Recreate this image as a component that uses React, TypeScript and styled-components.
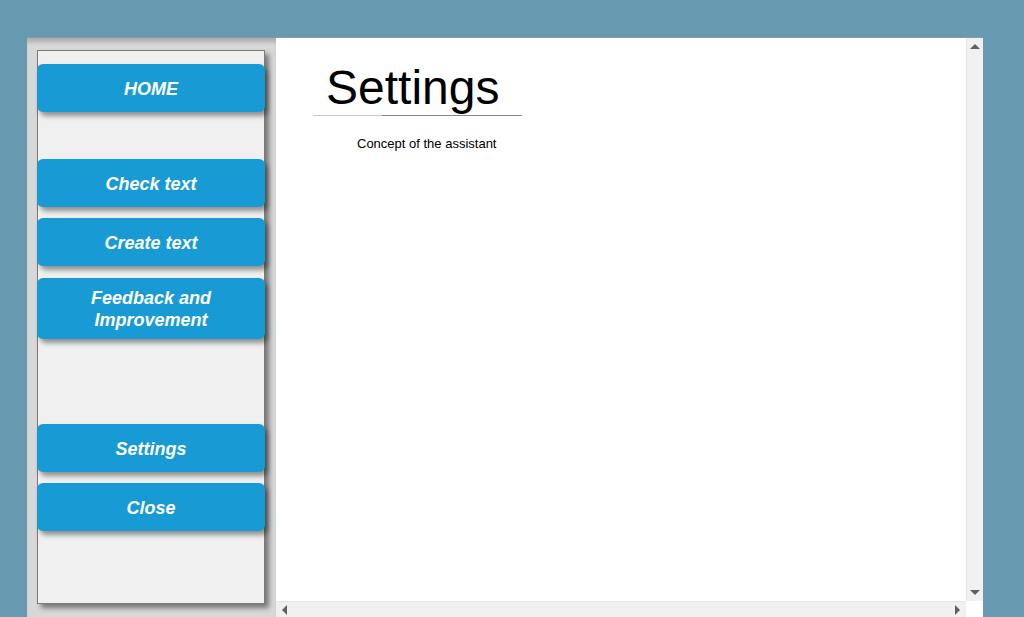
import React from 'react';
import styled, { createGlobalStyle } from 'styled-components';

const GlobalStyle = createGlobalStyle`
  html, body {
    margin: 0;
    padding: 0;
    background: #6799b0;
    font-family: "Liberation Sans", Arial, sans-serif;
  }
`;

const Page = styled.div`
  height: 617px;
  padding: 37px 0 0 27px;
  box-sizing: border-box;
  overflow: hidden;
`;

const Window = styled.div`
  display: flex;
  width: 956px;
  height: 580px;
  border-top: 1px solid #8a9aa2;
`;

const Sidebar = styled.div`
  width: 249px;
  flex-shrink: 0;
  background: #d8d8d8;
  padding: 12px 11px 0 10px;
  box-sizing: border-box;
  box-shadow: inset 0 6px 4px -2px rgba(0, 0, 0, 0.2);
`;

const Panel = styled.div`
  display: flex;
  flex-direction: column;
  width: 228px;
  height: 554px;
  box-sizing: border-box;
  background: #f0f0f0;
  border: 1px solid #7a7a7a;
  box-shadow: 4px 4px 5px rgba(0, 0, 0, 0.45);
`;

const NavButton = styled.button<{ top: number; tall?: boolean }>`
  display: flex;
  align-items: center;
  justify-content: center;
  margin: ${({ top }) => top}px -1px 0 -1px;
  width: 228px;
  height: ${({ tall }) => (tall ? 61 : 48)}px;
  padding: 1px 10px 0;
  border: none;
  border-radius: 6px;
  background: #189bd5;
  color: #fff;
  font-family: "Liberation Sans", Arial, sans-serif;
  font-size: 18px;
  font-weight: bold;
  font-style: italic;
  line-height: 22px;
  text-align: center;
  box-shadow: 3px 4px 5px rgba(0, 0, 0, 0.4);
  cursor: pointer;
`;

const Main = styled.div`
  flex: 1;
  display: grid;
  grid-template-columns: 1fr 17px;
  grid-template-rows: 1fr 17px;
  background: #fff;
`;

const Content = styled.div`
  padding: 23px 0 0 37px;
  overflow: hidden;
`;

const Title = styled.h1`
  margin: 0;
  width: 209px;
  padding: 0 0 0 13px;
  box-sizing: border-box;
  font-family: "Liberation Sans", Arial, sans-serif;
  font-size: 48px;
  font-weight: normal;
  line-height: 54px;
  color: #000;
`;

const Rule = styled.div`
  width: 209px;
  height: 1px;
  background: linear-gradient(to right, #c8c8c8 0 33%, #858585 33%);
`;

const Subtitle = styled.p`
  margin: 20px 0 0 44px;
  font-size: 13px;
  line-height: 15px;
  color: #000;
`;

const VScroll = styled.div`
  display: flex;
  flex-direction: column;
  justify-content: space-between;
  align-items: center;
  background: #f0f0f0;
  border-left: 1px solid #e6e6e6;
  padding: 6px 0 6px;
`;

const HScroll = styled.div`
  display: flex;
  justify-content: space-between;
  align-items: center;
  background: #f0f0f0;
  border-top: 1px solid #e6e6e6;
  padding: 0 6px;
`;

const Corner = styled.div`
  background: #fff;
`;

const Arrow = styled.div<{ dir: 'up' | 'down' | 'left' | 'right' }>`
  width: 0;
  height: 0;
  ${({ dir }) =>
    dir === 'up'
      ? 'border-left: 5px solid transparent; border-right: 5px solid transparent; border-bottom: 5px solid #606060;'
      : dir === 'down'
      ? 'border-left: 5px solid transparent; border-right: 5px solid transparent; border-top: 5px solid #606060;'
      : dir === 'left'
      ? 'border-top: 5px solid transparent; border-bottom: 5px solid transparent; border-right: 5px solid #606060;'
      : 'border-top: 5px solid transparent; border-bottom: 5px solid transparent; border-left: 5px solid #606060;'}
`;

const App: React.FC = () => {
  return (
    <Page>
      <GlobalStyle />
      <Window>
        <Sidebar>
          <Panel>
            <NavButton top={13}>HOME</NavButton>
            <NavButton top={47}>Check text</NavButton>
            <NavButton top={11}>Create text</NavButton>
            <NavButton top={12} tall>
              Feedback and
              <br />
              Improvement
            </NavButton>
            <NavButton top={85}>Settings</NavButton>
            <NavButton top={11}>Close</NavButton>
          </Panel>
        </Sidebar>
        <Main>
          <Content>
            <Title>Settings</Title>
            <Rule />
            <Subtitle>Concept of the assistant</Subtitle>
          </Content>
          <VScroll>
            <Arrow dir="up" />
            <Arrow dir="down" />
          </VScroll>
          <HScroll>
            <Arrow dir="left" />
            <Arrow dir="right" />
          </HScroll>
          <Corner />
        </Main>
      </Window>
    </Page>
  );
};

export default App;
